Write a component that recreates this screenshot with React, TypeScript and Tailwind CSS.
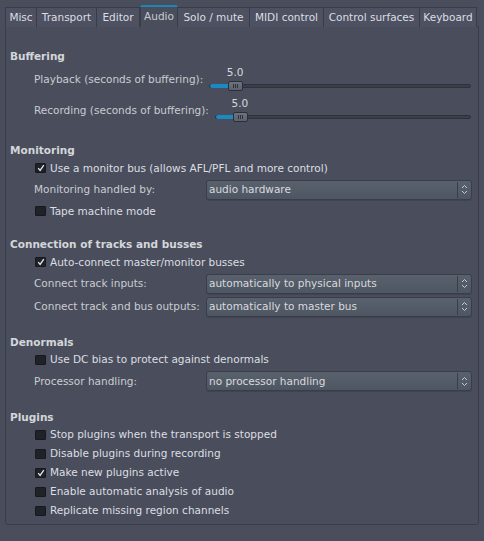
import React from "react";

const font = { fontFamily: '"DejaVu Sans", sans-serif' };

function Tab({ label, active, w }: { label: string; active?: boolean; w: number }) {
  if (active) {
    return (
      <div
        className="relative -mt-[3px] flex h-[22px] shrink-0 items-center justify-center whitespace-nowrap border-x border-[#3a3d48] bg-[#4a4e5c] text-[#c9ccd2]"
        style={{ width: w }}
      >
        <div className="absolute left-[-1px] right-[-1px] top-0 h-[2px] rounded-t-[2px] bg-[#1d84b3]" />
        <span className="pt-[1px]">{label}</span>
      </div>
    );
  }
  return (
    <div
      className="flex h-[19px] shrink-0 items-center justify-center whitespace-nowrap border-r border-[#3a3d48] bg-[#4d5161] text-[#dcdee2]"
      style={{ width: w }}
    >
      {label}
    </div>
  );
}

function Heading({ children }: { children: React.ReactNode }) {
  return (
    <div className="flex h-[16px] items-center whitespace-nowrap pl-[4px] font-bold text-[#d4d6da]">{children}</div>
  );
}

function Check({ label, checked, h = 19 }: { label: string; checked?: boolean; h?: number }) {
  return (
    <div className="flex items-center whitespace-nowrap pl-[29px]" style={{ height: h }}>
      <div className="flex h-[10px] w-[11px] items-center justify-center rounded-[1px] border border-[#17191e] bg-[#1f2229]">
        {checked && (
          <svg width="8" height="8" viewBox="0 0 8 8">
            <path d="M1.2 4.2 L3.1 6.4 L6.8 1.2" stroke="#e8e8e8" strokeWidth="1.3" fill="none" />
          </svg>
        )}
      </div>
      <span className="ml-[4px] text-[#dcdee2]">{label}</span>
    </div>
  );
}

function Combo({ label, value, h = 22 }: { label: string; value: string; h?: number }) {
  return (
    <div className="flex items-center whitespace-nowrap pl-[28px] pr-[6px]" style={{ height: h }}>
      <div className="w-[172px] shrink-0 text-[#c9ccd2]">{label}</div>
      <div className="flex h-[20px] flex-1 items-center rounded-[3px] border border-[#3a3e48] bg-gradient-to-b from-[#59616d] to-[#4f5663] shadow-[0_1px_0_#40444f]">
        <span className="flex-1 pl-[2px] text-[#d8dade]">{value}</span>
        <div className="h-[16px] w-px bg-[#3a3e48]" />
        <div className="flex w-[13px] items-center justify-center">
          <svg width="7" height="11" viewBox="0 0 7 11">
            <path d="M1 4 L3.5 1.5 L6 4" stroke="#c8cacf" strokeWidth="1" fill="none" />
            <path d="M1 7 L3.5 9.5 L6 7" stroke="#c8cacf" strokeWidth="1" fill="none" />
          </svg>
        </div>
      </div>
    </div>
  );
}

function SliderRow({ label, fill }: { label: string; fill: number }) {
  return (
    <div className="flex h-[31px] items-center whitespace-nowrap pl-[28px] pr-[7px]">
      <div className="shrink-0 text-[#c9ccd2]">{label}</div>
      <div className="ml-[6px] flex h-full flex-1 flex-col">
        <div className="relative h-[16px]">
          <span
            className="absolute top-[3px] text-[#d8dade]"
            style={{ left: fill + 8, transform: "translateX(-50%)" }}
          >
            5.0
          </span>
        </div>
        <div className="relative mt-[4px] h-[4px] rounded-[2px] border border-[#2f323b] bg-[#3b3f4a]">
          <div className="absolute left-0 top-[-1px] h-[4px] rounded-l-[2px] bg-[#1b8ac2]" style={{ width: fill + 2 }} />
          <div
            className="absolute top-[-4px] flex h-[10px] w-[15px] items-center justify-center gap-[1px] rounded-[2px] border border-[#2c2f37] bg-gradient-to-b from-[#6e747f] to-[#5c626d]"
            style={{ left: fill }}
          >
            <div className="h-[4px] w-px bg-[#2f323a]" />
            <div className="h-[4px] w-px bg-[#2f323a]" />
            <div className="h-[4px] w-px bg-[#2f323a]" />
          </div>
        </div>
      </div>
    </div>
  );
}

export default function App() {
  return (
    <div className="h-[541px] w-[484px] bg-[#4a4e5c] text-[10.5px] leading-none" style={font}>
      <div className="px-[5px] pt-[7px]">
        <div className="flex h-[19px] w-[472px] items-start border-l border-t border-[#3a3d48] bg-[#4d5161]">
          <Tab label="Misc" w={31} />
          <Tab label="Transport" w={60} />
          <Tab label="Editor" w={43} />
          <Tab label="Audio" active w={38} />
          <Tab label="Solo / mute" w={72} />
          <Tab label="MIDI control" w={74} />
          <Tab label="Control surfaces" w={96} />
          <Tab label="Keyboard" w={57} />
        </div>
        <div className="h-[499px] rounded-b-[3px] border border-[#3a3d48] bg-[#4a4e5c] pt-[21px]">
          <Heading>Buffering</Heading>
          <SliderRow label="Playback (seconds of buffering):" fill={18} />
          <SliderRow label="Recording (seconds of buffering):" fill={17} />
          <div className="h-[16px]" />
          <Heading>Monitoring</Heading>
          <Check label="Use a monitor bus (allows AFL/PFL and more control)" checked h={20} />
          <Combo label="Monitoring handled by:" value="audio hardware" h={23} />
          <Check label="Tape machine mode" h={20} />
          <div className="h-[15px]" />
          <Heading>Connection of tracks and busses</Heading>
          <Check label="Auto-connect master/monitor busses" checked h={20} />
          <Combo label="Connect track inputs:" value="automatically to physical inputs" h={23} />
          <Combo label="Connect track and bus outputs:" value="automatically to master bus" h={23} />
          <div className="h-[16px]" />
          <Heading>Denormals</Heading>
          <Check label="Use DC bias to protect against denormals" h={19} />
          <Combo label="Processor handling:" value="no processor handling" h={24} />
          <div className="h-[16px]" />
          <Heading>Plugins</Heading>
          <Check label="Stop plugins when the transport is stopped" />
          <Check label="Disable plugins during recording" />
          <Check label="Make new plugins active" checked />
          <Check label="Enable automatic analysis of audio" />
          <Check label="Replicate missing region channels" />
        </div>
      </div>
    </div>
  );
}
